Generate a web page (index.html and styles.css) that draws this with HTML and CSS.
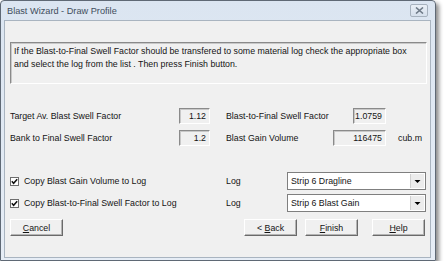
FILE: index.html
```html
<!DOCTYPE html>
<html lang="en">
<head>
  <meta charset="UTF-8">
  <title>Blast Wizard - Draw Profile</title>
  <link rel="stylesheet" href="styles.css">
</head>
<body>

  <div class="window">
    <div class="titlebar">
      <span class="title">Blast Wizard - Draw Profile</span>
      <span class="close">
        <svg width="9" height="7" viewBox="0 0 9 7"><path d="M1 0.5 L8 6.5 M8 0.5 L1 6.5" stroke="#6f7b88" stroke-width="1.6" fill="none"/></svg>
      </span>
    </div>

    <div class="client">
      <div class="message">If the Blast-to-Final Swell Factor should be transfered to some material log check the appropriate box<br>and select the log from the list . Then press Finish button.</div>

      <div class="fields">
        <span>Target Av. Blast Swell Factor</span>
        <span class="field">1.12</span>
        <span></span>
        <span>Blast-to-Final Swell Factor</span>
        <span class="field narrow">1.0759</span>
        <span></span>
        <span></span>

        <span>Bank to Final Swell Factor</span>
        <span class="field">1.2</span>
        <span></span>
        <span>Blast Gain Volume</span>
        <span class="field">116475</span>
        <span></span>
        <span>cub.m</span>
      </div>

      <div class="logs">
        <label class="check"><span class="box"><svg width="7" height="7" viewBox="0 0 7 7"><path d="M0.8 3.3 L2.6 5.3 L6.2 1.2" stroke="#111" stroke-width="1.5" fill="none"/></svg></span>Copy Blast Gain Volume to Log</label>
        <span>Log</span>
        <div class="combo"><span class="combo-text">Strip 6 Dragline</span><span class="arrow"><svg width="7" height="6" viewBox="0 0 7 6"><path d="M0.5 2 H6.5 L3.5 5 Z" fill="#000"/></svg></span></div>

        <label class="check"><span class="box"><svg width="7" height="7" viewBox="0 0 7 7"><path d="M0.8 3.3 L2.6 5.3 L6.2 1.2" stroke="#111" stroke-width="1.5" fill="none"/></svg></span>Copy Blast-to-Final Swell Factor to Log</label>
        <span>Log</span>
        <div class="combo"><span class="combo-text">Strip 6 Blast Gain</span><span class="arrow"><svg width="7" height="6" viewBox="0 0 7 6"><path d="M0.5 2 H6.5 L3.5 5 Z" fill="#000"/></svg></span></div>
      </div>

      <div class="buttons">
        <button><u>C</u>ancel</button>
        <div class="nav">
          <button>&lt; <u>B</u>ack</button>
          <button><u>F</u>inish</button>
          <button class="help"><u>H</u>elp</button>
        </div>
      </div>
    </div>
  </div>

</body>
</html>
```

FILE: styles.css
```css
body {
  margin: 0;
  background-color: #ffffff;
  font-family: "Liberation Sans", Arial, sans-serif;
  font-size: 8.8px;
  color: #141414;
}
.window {
  width: 434px;
  height: 259px;
  border: 1px solid #5f6975;
  border-radius: 4px 4px 0 0;
  background: linear-gradient(#dbe5f1, #e6edf6);
  box-shadow: 3px 3px 4px rgba(0, 0, 0, 0.45);
  display: flex;
  flex-direction: column;
}
.titlebar {
  height: 19px;
  display: flex;
  align-items: center;
  padding-left: 6px;
}
.title {
  flex: 1;
  font-size: 9.2px;
  color: #3f4d5c;
}
.close {
  width: 16px;
  height: 11px;
  margin-right: 7px;
  border: 1px solid #a7b2be;
  border-radius: 2px;
  background: linear-gradient(#e9eff6, #d6e0ec);
  display: flex;
  align-items: center;
  justify-content: center;
}
.client {
  flex: 1;
  margin: 0 4px 2px 3px;
  border: 1px solid #a9b4c0;
  background-color: #f0f0f0;
  padding: 21px 3px 0 5px;
}
.message {
  height: 36px;
  padding: 2px 3px;
  line-height: 13px;
  border-top: 1px solid #8a8a8a;
  border-left: 1px solid #8a8a8a;
  border-right: 1px solid #ffffff;
  border-bottom: 1px solid #ffffff;
  box-shadow: inset 1px 1px 0 #c8c8c8;
}
.fields {
  margin-top: 24px;
  display: grid;
  grid-template-columns: 169px 31px 16px 107px 53px 12px auto;
  row-gap: 6px;
  align-items: center;
}
.field {
  height: 14px;
  line-height: 14px;
  padding-right: 3px;
  text-align: right;
  border-top: 1px solid #8a8a8a;
  border-left: 1px solid #8a8a8a;
  border-right: 1px solid #ffffff;
  border-bottom: 1px solid #ffffff;
  box-shadow: inset 1px 1px 0 #c8c8c8;
}
.narrow {
  width: 28px;
  justify-self: end;
}
.logs {
  margin-top: 26px;
  display: grid;
  grid-template-columns: 216px 61px 139px;
  row-gap: 4px;
  align-items: center;
}
.check {
  display: flex;
  align-items: center;
  gap: 5px;
}
.box {
  width: 9px;
  height: 9px;
  box-sizing: border-box;
  border: 1px solid #6e6e6e;
  background-color: #ffffff;
  display: flex;
  align-items: center;
  justify-content: center;
}
.combo {
  height: 16px;
  display: flex;
  align-items: center;
  border: 1px solid #7f7f7f;
  background-color: #ffffff;
}
.combo-text {
  flex: 1;
  padding-left: 3px;
}
.arrow {
  width: 13px;
  height: 14px;
  margin-right: 1px;
  background-color: #ececec;
  border-left: 1px solid #d0d0d0;
  display: flex;
  align-items: center;
  justify-content: center;
}
.buttons {
  margin-top: 7px;
  display: flex;
}
.nav {
  margin-left: auto;
  margin-right: 2px;
  display: flex;
  gap: 8px;
}
button {
  width: 53px;
  height: 17px;
  padding: 0;
  font-family: inherit;
  font-size: 8.8px;
  color: #141414;
  background-color: #f0f0f0;
  border-top: 1px solid #ffffff;
  border-left: 1px solid #ffffff;
  border-right: 1px solid #6a6a6a;
  border-bottom: 1px solid #6a6a6a;
  box-shadow: inset -1px -1px 0 #b4b4b4;
}
.help {
  margin-left: 6px;
}
```
